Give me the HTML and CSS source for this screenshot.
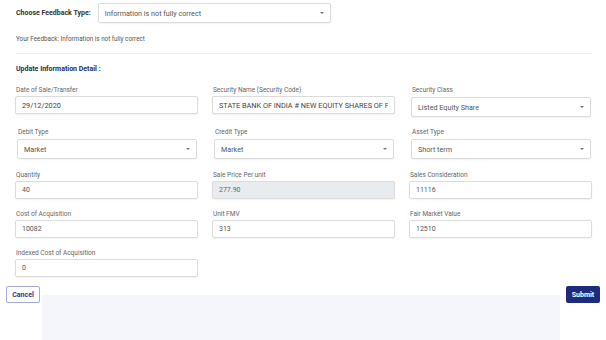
FILE: index.html
```html
<!DOCTYPE html>
<html lang="en">
<head>
  <meta charset="UTF-8">
  <meta name="viewport" content="width=device-width, initial-scale=1.0">
  <title>Feedback</title>
  <link rel="stylesheet" href="styles.css">
</head>
<body>
  <div class="page">
    <div class="feedback-row">
      <label class="feedback-label" for="feedbackType">Choose Feedback Type:</label>
      <div class="select-wrap top-select">
        <select id="feedbackType">
          <option>Information is not fully correct</option>
        </select>
        <span class="caret"></span>
      </div>
    </div>
    <p class="your-feedback">Your Feedback: Information is not fully correct</p>
    <hr class="divider">
    <h4 class="section-title">Update Information Detail :</h4>

    <div class="form-grid">
      <div class="field">
        <label>Date of Sale/Transfer</label>
        <input type="text" class="strong" value="29/12/2020">
      </div>
      <div class="field">
        <label>Security Name (Security Code)</label>
        <input type="text" class="strong" value="STATE BANK OF INDIA # NEW EQUITY SHARES OF F&#8217;">
      </div>
      <div class="field field-select first-row">
        <label>Security Class</label>
        <div class="select-wrap">
          <select><option>Listed Equity Share</option></select>
          <span class="caret"></span>
        </div>
      </div>

      <div class="field field-select">
        <label>Debit Type</label>
        <div class="select-wrap">
          <select><option>Market</option></select>
          <span class="caret"></span>
        </div>
      </div>
      <div class="field field-select">
        <label>Credit Type</label>
        <div class="select-wrap">
          <select><option>Market</option></select>
          <span class="caret"></span>
        </div>
      </div>
      <div class="field field-select">
        <label>Asset Type</label>
        <div class="select-wrap">
          <select><option>Short term</option></select>
          <span class="caret"></span>
        </div>
      </div>

      <div class="field">
        <label>Quantity</label>
        <input type="text" value="40">
      </div>
      <div class="field">
        <label>Sale Price Per unit</label>
        <input type="text" value="277.90" disabled>
      </div>
      <div class="field">
        <label>Sales Consideration</label>
        <input type="text" value="11116">
      </div>

      <div class="field">
        <label>Cost of Acquisition</label>
        <input type="text" value="10082">
      </div>
      <div class="field">
        <label>Unit FMV</label>
        <input type="text" value="313">
      </div>
      <div class="field">
        <label>Fair Market Value</label>
        <input type="text" value="12510">
      </div>

      <div class="field">
        <label>Indexed Cost of Acquisition</label>
        <input type="text" value="0">
      </div>
    </div>

    <div class="actions">
      <button class="btn-cancel">Cancel</button>
      <div class="shade"></div>
      <button class="btn-submit">Submit</button>
    </div>
  </div>
</body>
</html>
```
FILE: styles.css
```css
body { margin: 0; font-family: Roboto, "Liberation Sans", sans-serif; background: #fff; color: #444; }
.page { padding: 3px 0 0 0; }

.feedback-row { display: flex; align-items: center; padding-left: 16px; }
.feedback-label { font-size: 7px; font-weight: 700; color: #333; margin-right: 7px; }
.top-select { width: 233px; }

.select-wrap { position: relative; }
.select-wrap select { display: block; -webkit-appearance: none; appearance: none; width: 100%; height: 20px; box-sizing: border-box; padding: 0 6px; border: 1px solid #dcdcdc; border-radius: 2px; background: #fff; font-family: inherit; font-size: 7.2px; color: #555; box-shadow: 0 1px 2px rgba(0,0,0,0.06); }
.caret { position: absolute; right: 7px; top: 9px; width: 0; height: 0; border-left: 2.5px solid transparent; border-right: 2.5px solid transparent; border-top: 2.5px solid #777; }

.your-feedback { margin: 12px 0 0 16px; font-size: 6.3px; line-height: 8px; color: #555; }
.divider { margin: 10px 14px 0 16px; border: 0; border-top: 1px solid #eee; }
.section-title { margin: 11px 0 0 16px; font-size: 7px; line-height: 9px; font-weight: 700; color: #1f2d5c; }

.form-grid { display: grid; grid-template-columns: 183px 183px 183px; column-gap: 14px; row-gap: 11px; padding: 12px 0 0 15px; }
.field label { display: block; font-size: 6.5px; line-height: 8px; margin: 0 0 2px 1px; color: #666; }
.field input { display: block; width: 100%; height: 18px; box-sizing: border-box; padding: 0 6px; border: 1px solid #dcdcdc; border-radius: 2px; font-family: inherit; font-size: 7px; color: #555; box-shadow: 0 1px 2px rgba(0,0,0,0.06); }
.field input.strong { font-size: 7.3px; color: #444; }
.field input:disabled { background: #e9ecef; color: #666; }
.field-select { padding: 0 1px 0 2px; }
.field-select label { margin-left: 1px; margin-bottom: 3px; }
.field-select .select-wrap { margin-bottom: 1px; }
.first-row .select-wrap { margin-bottom: 0; }

.actions { display: flex; align-items: flex-start; padding: 9px 6px 0 6px; }
.shade { flex: 1; height: 46px; margin: 9px 6px 0 2px; background: #f5f6fb; }
.btn-cancel { width: 34px; height: 17px; padding: 0; border: 1px solid #a4abd9; border-radius: 2px; background: #fff; color: #2b3a8a; font-family: inherit; font-size: 7px; font-weight: 700; }
.btn-submit { width: 34px; height: 17px; padding: 0; border: 0; border-radius: 2px; background: #1f2b7c; color: #fff; font-family: inherit; font-size: 7px; font-weight: 700; }
```
